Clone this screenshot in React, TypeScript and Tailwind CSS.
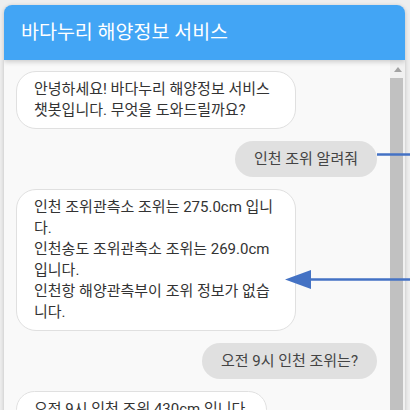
import React from "react";

const font = { fontFamily: "Roboto, 'Noto Sans CJK KR', sans-serif" };

function Bot({ children }: { children: React.ReactNode }) {
  return (
    <div className="self-start max-w-[280px] bg-white border border-[#e0e0e0] rounded-[20px] px-[17px] py-[7px] text-[15px] leading-[21px] text-[#333333]">
      {children}
    </div>
  );
}

function User({ children }: { children: React.ReactNode }) {
  return (
    <div className="self-end bg-[#e0e0e0] rounded-full px-[19px] py-[8px] text-[15px] leading-[20px] text-[#444444] whitespace-nowrap">
      {children}
    </div>
  );
}

export default function App() {
  return (
    <div className="relative w-[410px] h-[410px] overflow-hidden bg-[#eeeeee] pt-[5px] pl-[4px]" style={font}>
      <div className="w-[401px] h-[420px] bg-[#f9f9f9] rounded-t-lg shadow-[0_1px_4px_rgba(0,0,0,0.2)] flex flex-col overflow-hidden">
        <div className="relative z-10 h-[55px] shrink-0 bg-[#42a5f5] px-[17px] flex items-center text-white text-[19.5px] shadow-[0_2px_5px_rgba(0,0,0,0.18)]">
          바다누리 해양정보 서비스
        </div>
        <div className="flex flex-1 min-h-0">
          <div className="flex-1 flex flex-col gap-3 pt-[11px] pl-3 pr-[13px]">
            <Bot>안녕하세요! 바다누리 해양정보 서비스 챗봇입니다. 무엇을 도와드릴까요?</Bot>
            <User>인천 조위 알려줘</User>
            <Bot>
              인천 조위관측소 조위는 275.0cm 입니다.
              <br />
              인천송도 조위관측소 조위는 269.0cm 입니다.
              <br />
              인천항 해양관측부이 조위 정보가 없습니다.
            </Bot>
            <User>오전 9시 인천 조위는?</User>
            <Bot>오전 9시 인천 조위 430cm 입니다.</Bot>
          </div>
          <div className="w-[15px] shrink-0 bg-[#f1f1f1] flex flex-col items-center">
            <div className="h-[18px] flex items-center justify-center">
              <svg width="8" height="5" viewBox="0 0 8 5">
                <polygon points="4,0 8,5 0,5" fill="#a3a3a3" />
              </svg>
            </div>
            <div className="w-[13px] self-start flex-1 bg-[#c1c1c1]" />
          </div>
        </div>
      </div>
      <svg className="absolute left-0 top-0 pointer-events-none" width="410" height="410" viewBox="0 0 410 410">
        <line x1="377" y1="154.5" x2="410" y2="154.5" stroke="#4472c4" strokeWidth="2.5" />
        <line x1="305" y1="279.5" x2="410" y2="279.5" stroke="#4472c4" strokeWidth="2.5" />
        <polygon points="285,279.5 311,270 311,289" fill="#4472c4" />
      </svg>
    </div>
  );
}
